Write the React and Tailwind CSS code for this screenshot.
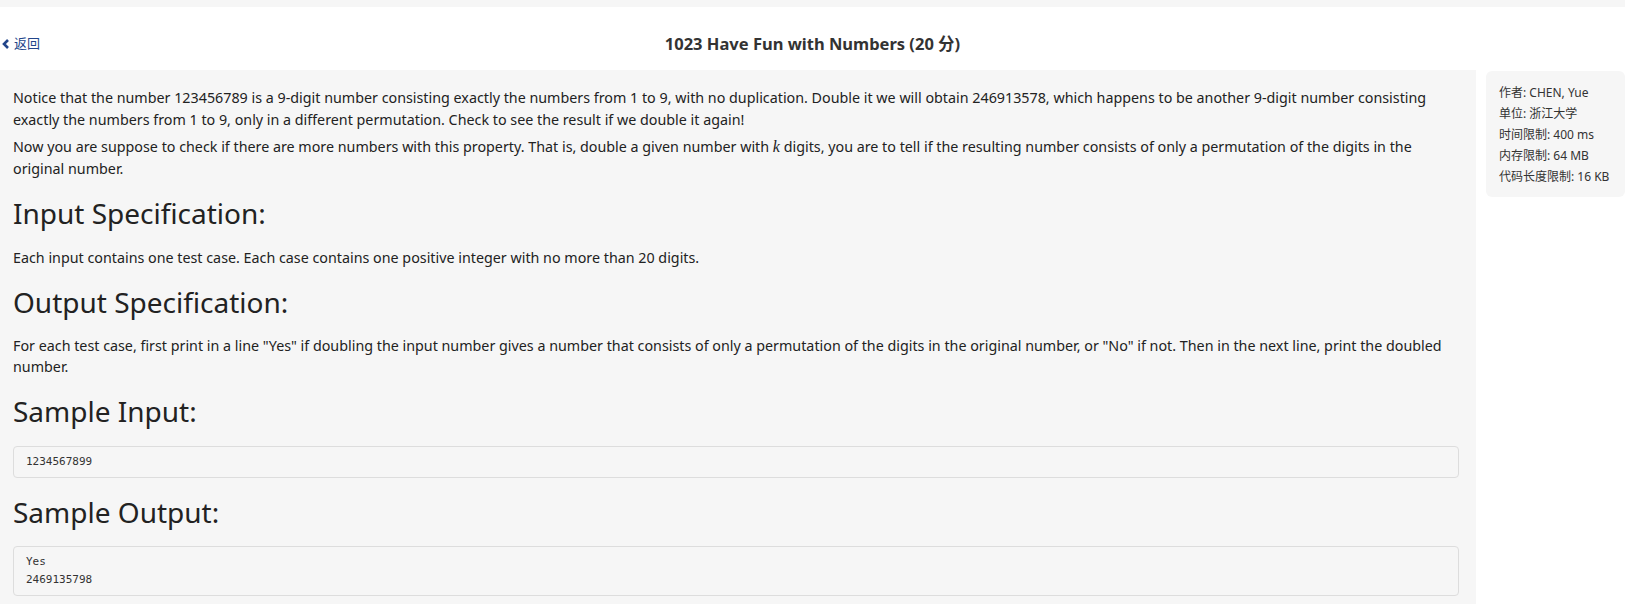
const Heading = ({ children, className = "" }) => (
  <h3 className={"text-[28px] leading-[34px] text-[#222] " + className}>{children}</h3>
)

const Sample = ({ lines }) => (
  <pre className="rounded border border-[#ddd] bg-[#f6f6f6] px-3 py-[6px] text-[11px] leading-[18px] text-[#333] font-['DejaVu_Sans_Mono',monospace]">
    {lines.join("\n")}
  </pre>
)

export default function App() {
  const info = [
    "作者: CHEN, Yue",
    "单位: 浙江大学",
    "时间限制: 400 ms",
    "内存限制: 64 MB",
    "代码长度限制: 16 KB"
  ]

  return (
    <div className="min-h-[605px] bg-white font-['Noto_Sans','Noto_Sans_CJK_SC',sans-serif] text-[#222]">
      <div className="h-[7px] bg-[#f6f6f6]" />
      <header className="relative flex h-[63px] items-center justify-center pt-[12px]">
        <a className="absolute left-0 top-[27px] flex items-center gap-[3px] text-[13px] text-[#22458a]">
          <svg width="10" height="12" viewBox="0 0 10 12" className="ml-[1px]">
            <path d="M7 2 L3 6 L7 10" fill="none" stroke="#22458a" strokeWidth="2.6" />
          </svg>
          返回
        </a>
        <h1 className="text-[16.5px] font-bold text-[#333]">1023 Have Fun with Numbers (20 分)</h1>
      </header>

      <div className="flex items-start">
        <main className="w-[1476px] shrink-0 bg-[#f6f6f6] pl-[13px] pr-[17px] pt-[17px] pb-[8px] text-[14.3px] leading-[21.5px]">
          <p className="mb-[6px]">
            Notice that the number 123456789 is a 9-digit number consisting exactly the numbers from 1 to 9, with no duplication. Double it we will obtain 246913578, which happens to be another 9-digit number consisting exactly the numbers from 1 to 9, only in a different permutation. Check to see the result if we double it again!
          </p>
          <p>
            Now you are suppose to check if there are more numbers with this property. That is, double a given number with <i className="font-['Liberation_Serif',serif] text-[16px] leading-[20px]">k</i> digits, you are to tell if the resulting number consists of only a permutation of the digits in the original number.
          </p>

          <Heading className="mt-[17px] mb-[17px]">Input Specification:</Heading>
          <p>Each input contains one test case. Each case contains one positive integer with no more than 20 digits.</p>

          <Heading className="mt-[16px] mb-[16px]">Output Specification:</Heading>
          <p>
            For each test case, first print in a line "Yes" if doubling the input number gives a number that consists of only a permutation of the digits in the original number, or "No" if not. Then in the next line, print the doubled number.
          </p>

          <Heading className="mt-[16px] mb-[18px]">Sample Input:</Heading>
          <Sample lines={["1234567899"]} />

          <Heading className="mt-[17px] mb-[17px]">Sample Output:</Heading>
          <Sample lines={["Yes", "2469135798"]} />
        </main>

        <aside className="ml-[10px] mt-[1px] flex-1 whitespace-nowrap rounded-md bg-[#f6f6f6] px-[13px] pt-[11px] pb-[10px] text-[12px] leading-[21px] text-[#333]">
          {info.map((line) => (
            <div key={line}>{line}</div>
          ))}
        </aside>
      </div>
    </div>
  )
}
